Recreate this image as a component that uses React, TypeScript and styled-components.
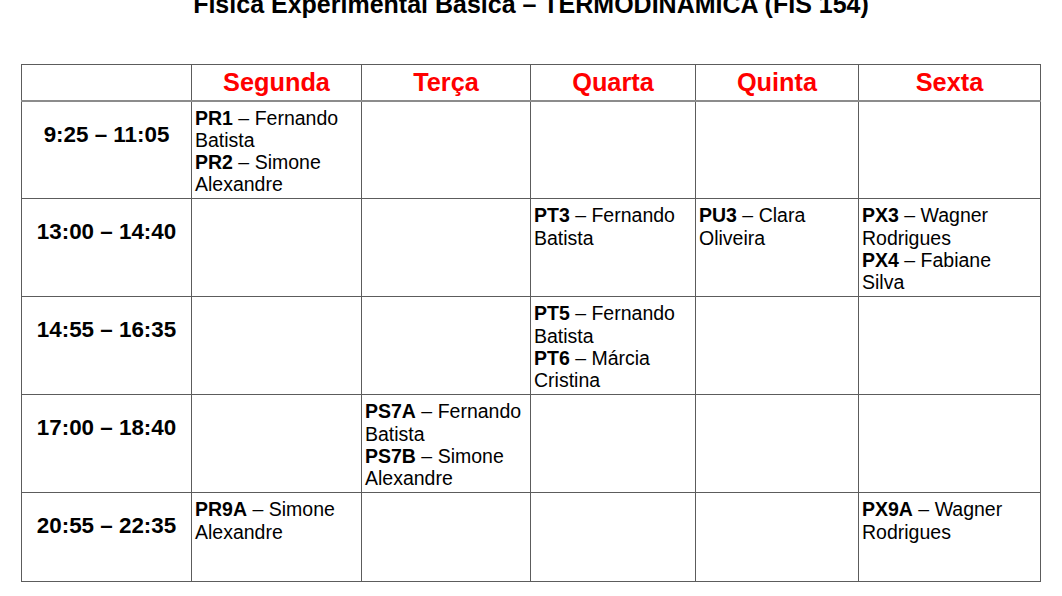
import styled, { createGlobalStyle } from "styled-components";

const GlobalStyle = createGlobalStyle`
  html, body {
    margin: 0;
    padding: 0;
    background: #ffffff;
  }
  body {
    font-family: "Liberation Sans", Arial, sans-serif;
    color: #000000;
    overflow: hidden;
  }
`;

type Entry = { code: string; name: string };

const days = ["Segunda", "Terça", "Quarta", "Quinta", "Sexta"];
const colWidths = [170, 170, 169, 165, 163, 182];

const rows: { time: string; height: number; slots: Entry[][] }[] = [
  {
    time: "9:25 – 11:05",
    height: 98,
    slots: [
      [
        { code: "PR1", name: "Fernando Batista" },
        { code: "PR2", name: "Simone Alexandre" },
      ],
      [],
      [],
      [],
      [],
    ],
  },
  {
    time: "13:00 – 14:40",
    height: 98,
    slots: [
      [],
      [],
      [{ code: "PT3", name: "Fernando Batista" }],
      [{ code: "PU3", name: "Clara Oliveira" }],
      [
        { code: "PX3", name: "Wagner Rodrigues" },
        { code: "PX4", name: "Fabiane Silva" },
      ],
    ],
  },
  {
    time: "14:55 – 16:35",
    height: 98,
    slots: [
      [],
      [],
      [
        { code: "PT5", name: "Fernando Batista" },
        { code: "PT6", name: "Márcia Cristina" },
      ],
      [],
      [],
    ],
  },
  {
    time: "17:00 – 18:40",
    height: 98,
    slots: [
      [],
      [
        { code: "PS7A", name: "Fernando Batista" },
        { code: "PS7B", name: "Simone Alexandre" },
      ],
      [],
      [],
      [],
    ],
  },
  {
    time: "20:55 – 22:35",
    height: 89,
    slots: [
      [{ code: "PR9A", name: "Simone Alexandre" }],
      [],
      [],
      [],
      [{ code: "PX9A", name: "Wagner Rodrigues" }],
    ],
  },
];

export default function App() {
  return (
    <Page>
      <GlobalStyle />
      <Title>Física Experimental Básica – TERMODINÂMICA (FIS 154)</Title>
      <Schedule>
        <colgroup>
          {colWidths.map((w, i) => (
            <Col key={i} $width={w} />
          ))}
        </colgroup>
        <thead>
          <HeadRow>
            <HeadCell />
            {days.map((d) => (
              <HeadCell key={d}>{d}</HeadCell>
            ))}
          </HeadRow>
        </thead>
        <tbody>
          {rows.map((row) => (
            <BodyRow key={row.time} $height={row.height}>
              <TimeCell>
                <TimeLabel>{row.time}</TimeLabel>
              </TimeCell>
              {row.slots.map((slot, i) => (
                <SlotCell key={i}>
                  {slot.map((e) => (
                    <Class key={e.code}>
                      <Code>{e.code}</Code> – {e.name}
                    </Class>
                  ))}
                </SlotCell>
              ))}
            </BodyRow>
          ))}
        </tbody>
      </Schedule>
    </Page>
  );
}

const Page = styled.div`
  display: flex;
  flex-direction: column;
  width: 1062px;
  height: 596px;
`;

const Title = styled.h1`
  margin: -10px 0 0;
  font-size: 25px;
  font-weight: 700;
  line-height: normal;
  text-align: center;
`;

const Schedule = styled.table`
  margin: 45px 0 0 21px;
  width: 1019px;
  table-layout: fixed;
  border-collapse: collapse;
  border: 1px solid #5c5c5c;
`;

const Col = styled.col<{ $width: number }>`
  width: ${(p) => p.$width}px;
`;

const HeadRow = styled.tr`
  height: 36px;
  border-bottom: 2px solid #8c8c8c;
`;

const HeadCell = styled.th`
  padding: 2px 4px;
  border-left: 1px solid #5c5c5c;
  color: #ff0000;
  font-size: 25.3px;
  font-weight: 700;
  line-height: 29px;
  text-align: center;
  vertical-align: middle;
`;

const BodyRow = styled.tr<{ $height: number }>`
  height: ${(p) => p.$height}px;
  border-top: 1px solid #5c5c5c;
`;

const TimeCell = styled.td`
  padding: 5px 3px 3px;
  border-left: 1px solid #5c5c5c;
  text-align: center;
  vertical-align: top;
`;

const TimeLabel = styled.div`
  margin-top: 15px;
  font-size: 22.4px;
  font-weight: 700;
  line-height: normal;
`;

const SlotCell = styled.td`
  padding: 5px 5px 3px 3px;
  border-left: 1px solid #5c5c5c;
  vertical-align: top;
  font-size: 19.5px;
  line-height: 22.2px;
`;

const Class = styled.div`
  margin: 0;
`;

const Code = styled.b`
  font-weight: 700;
`;
